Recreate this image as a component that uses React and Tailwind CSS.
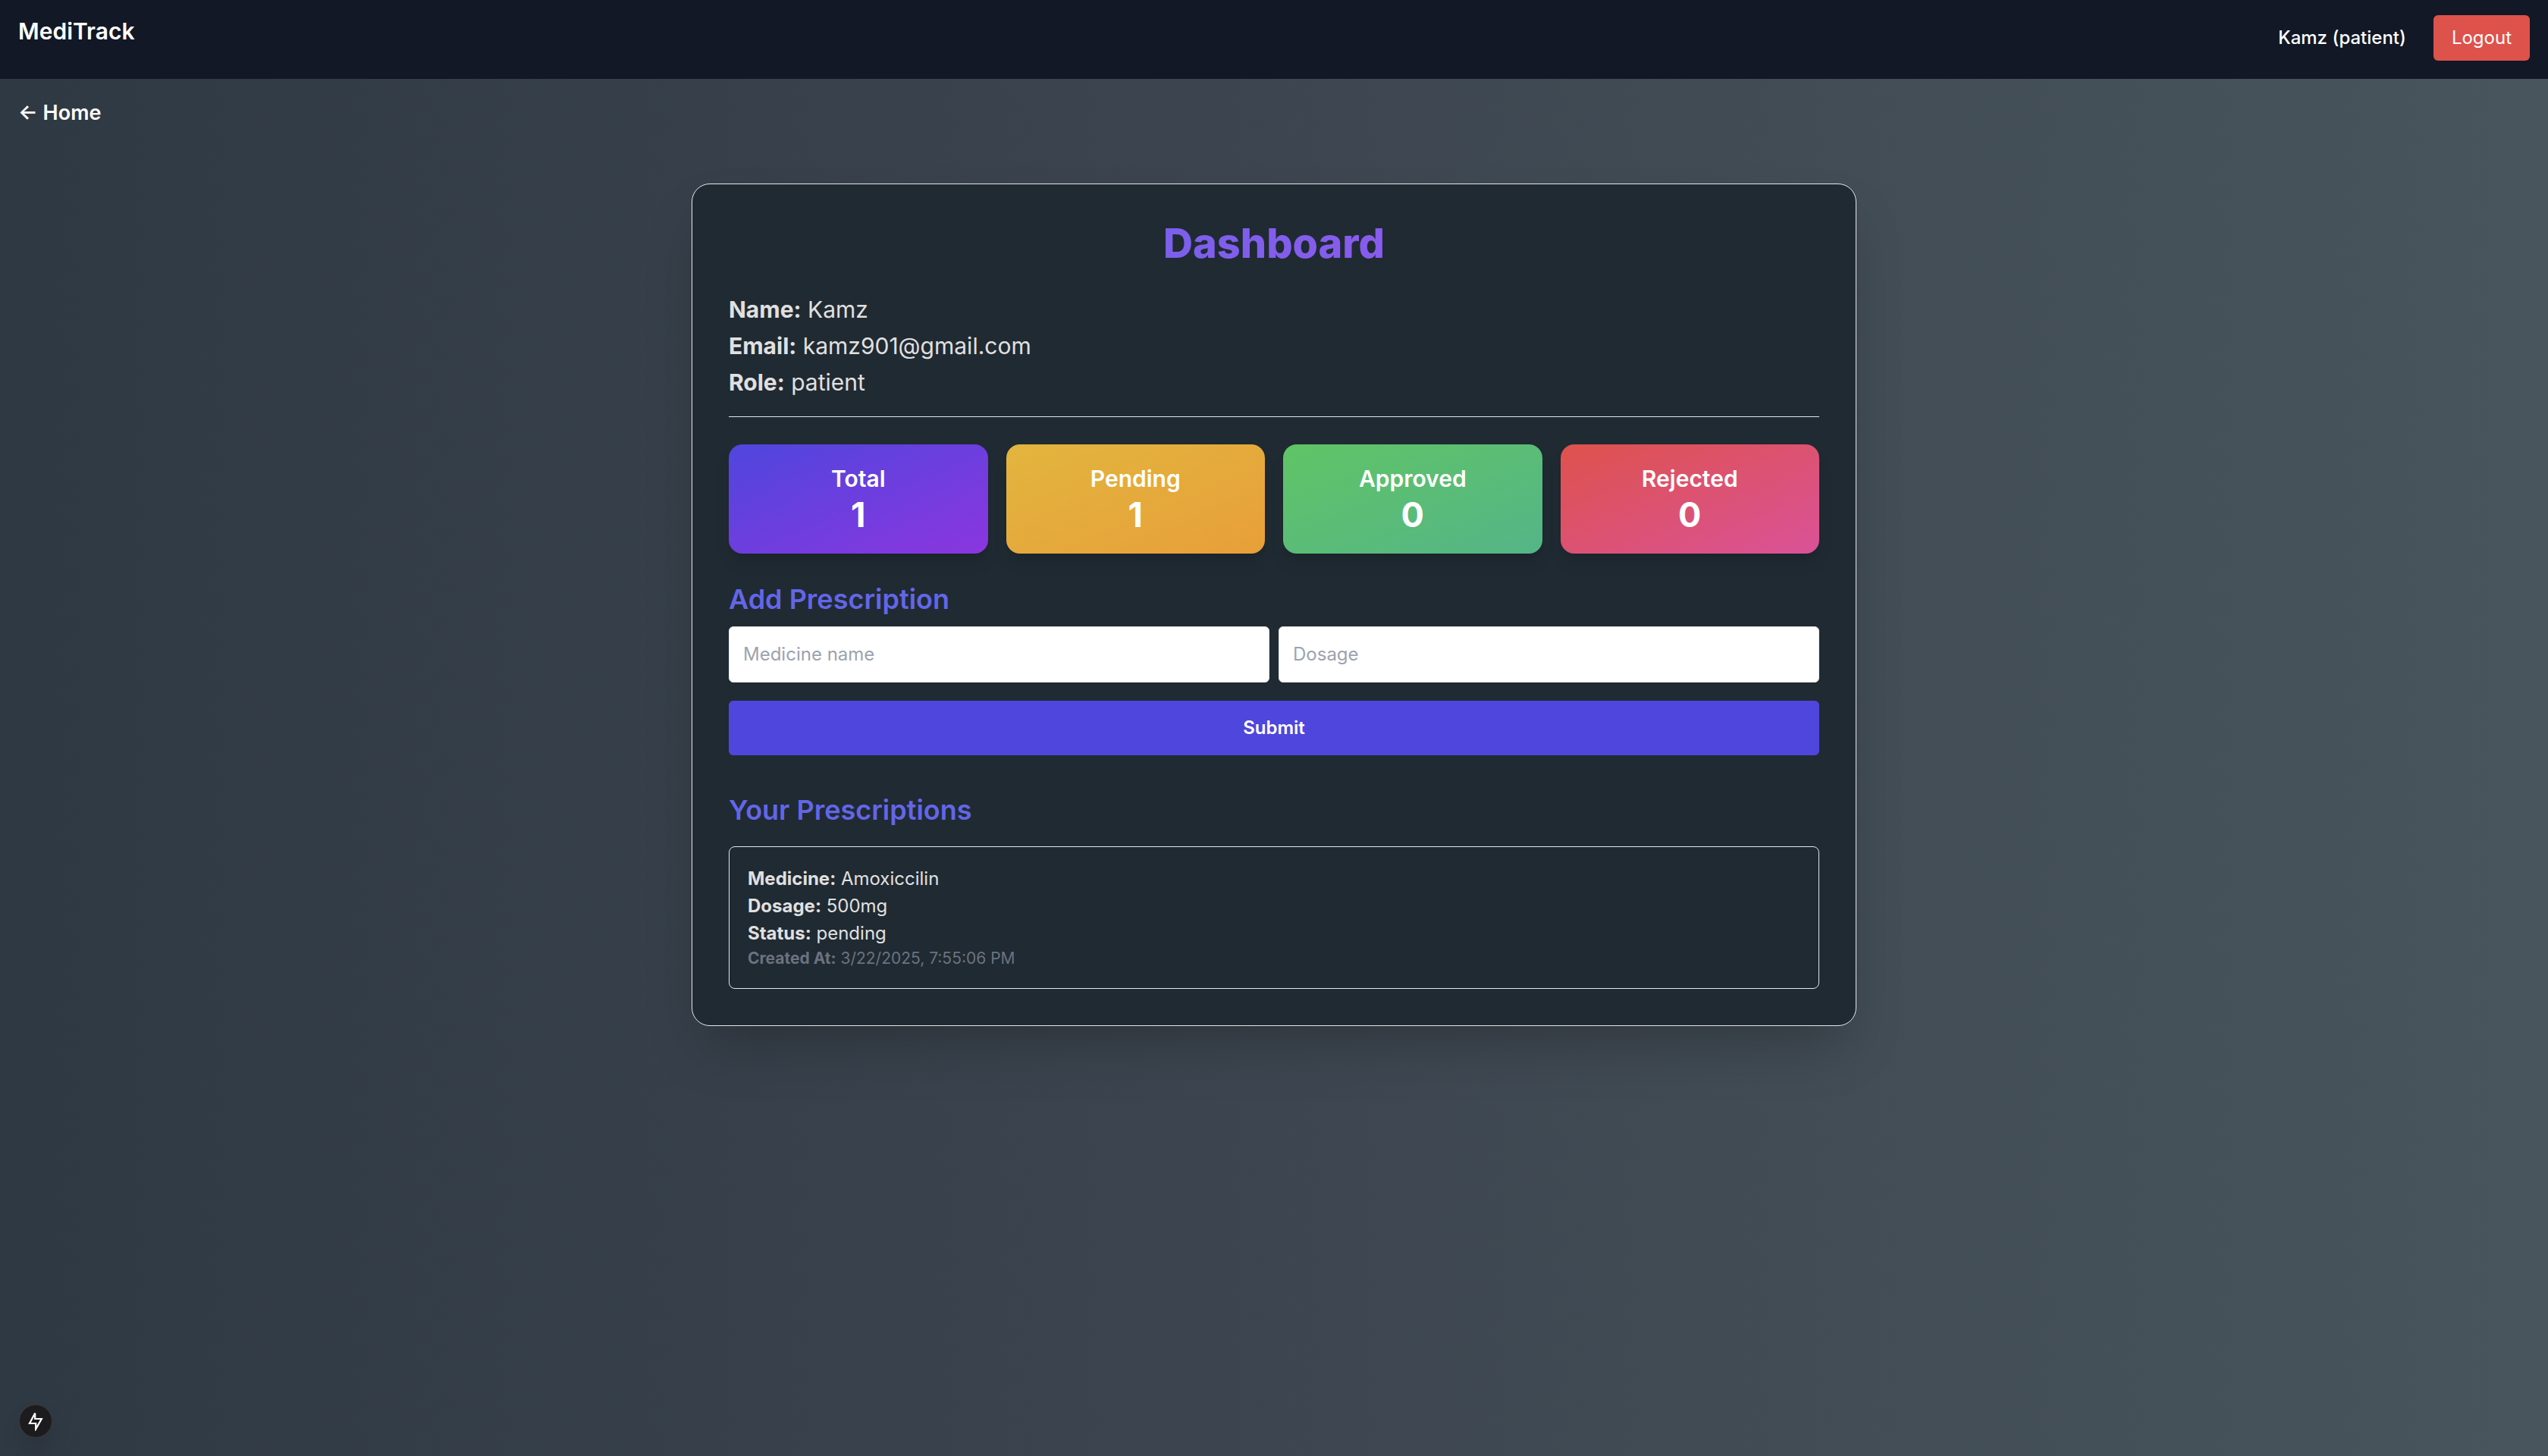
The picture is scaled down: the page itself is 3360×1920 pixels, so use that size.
import { useState } from "react";

const stats = [
  { label: "Total", value: 1, tone: "from-[#4f46dd] to-[#8b36df]" },
  { label: "Pending", value: 1, tone: "from-[#e2b53e] to-[#e89f39]" },
  { label: "Approved", value: 0, tone: "from-[#60c466] to-[#54b587]" },
  { label: "Rejected", value: 0, tone: "from-[#de524c] to-[#da5298]" },
];

const prescriptions = [
  { medicine: "Amoxiccilin", dosage: "500mg", status: "pending", createdAt: "3/22/2025, 7:55:06 PM" },
];

function Header() {
  return (
    <header className="flex items-start justify-between bg-[#121826] px-6 pt-5 pb-6 text-white">
      <a href="#" className="text-[30px] leading-[42px] font-semibold">MediTrack</a>
      <div className="flex items-center gap-9 text-2xl leading-9">
        <span className="font-medium">Kamz (patient)</span>
        <button type="button" className="rounded-md bg-[#de524c] px-6 py-3">Logout</button>
      </div>
    </header>
  );
}

function StatCard({ label, value, tone }) {
  return (
    <div className={`rounded-[18px] bg-linear-to-br/srgb p-6 text-center text-white shadow-[0_15px_22px_-4px_rgba(0,0,0,0.1),0_6px_9px_-6px_rgba(0,0,0,0.1)] ${tone}`}>
      <h3 className="text-[30px] leading-[42px] font-semibold">{label}</h3>
      <p className="text-[45px] leading-[54px] font-bold">{value}</p>
    </div>
  );
}

function Field({ label, value, onChange }) {
  return (
    <input
      aria-label={label}
      placeholder={label}
      value={value}
      onChange={(e) => onChange(e.target.value)}
      className="min-w-0 flex-1 rounded-md border border-gray-200 bg-white p-[18px] text-2xl leading-9 text-gray-900 placeholder:text-[#9ca3af]"
    />
  );
}

function PrescriptionItem({ item }) {
  return (
    <li className="rounded-lg border border-[#e5e7eb] p-6 text-2xl leading-9">
      <p><strong className="font-bold">Medicine:</strong> {item.medicine}</p>
      <p><strong className="font-bold">Dosage:</strong> {item.dosage}</p>
      <p><strong className="font-bold">Status:</strong> {item.status}</p>
      <p className="text-[21px] leading-[30px] text-[#6b7280]">
        <strong className="font-bold">Created At:</strong> {item.createdAt}
      </p>
    </li>
  );
}

export default function App() {
  const [medicine, setMedicine] = useState("");
  const [dosage, setDosage] = useState("");

  return (
    <div className="flex min-h-screen flex-col bg-linear-to-r/srgb from-[#2f3943] via-[#3d4650] to-[#48555c] font-['Inter',sans-serif]">
      <Header />
      <main className="p-6">
        <a href="#" className="inline-block text-[27px] leading-[42px] font-semibold text-white">← Home</a>

        <section className="mx-auto mt-[72px] max-w-[1536px] rounded-3xl border border-[#e5e7eb] bg-[#202a32] p-12 text-[#e0e0e0] shadow-[0_38px_75px_-18px_rgba(0,0,0,0.25)]">
          <h1 className="mb-9 bg-linear-to-r/srgb from-[#6366e8] to-[#a055f0] bg-clip-text text-center text-[54px] leading-[60px] font-extrabold text-transparent">
            Dashboard
          </h1>

          <div className="mb-9 space-y-1.5 border-b border-[#e5e7eb] pb-6 text-[30px] leading-[42px]">
            <p><strong className="font-bold">Name:</strong> Kamz</p>
            <p><strong className="font-bold">Email:</strong> kamz901@gmail.com</p>
            <p><strong className="font-bold">Role:</strong> patient</p>
          </div>

          <div className="mb-9 grid grid-cols-4 gap-6">
            {stats.map((s) => <StatCard key={s.label} {...s} />)}
          </div>

          <form className="mb-12" onSubmit={(e) => e.preventDefault()}>
            <h2 className="mb-3 text-4xl leading-[48px] font-semibold text-[#6366e8]">Add Prescription</h2>
            <div className="mb-6 flex gap-3">
              <Field label="Medicine name" value={medicine} onChange={setMedicine} />
              <Field label="Dosage" value={dosage} onChange={setDosage} />
            </div>
            <button type="submit" className="w-full rounded-md bg-[#4f46dd] p-[18px] text-2xl leading-9 font-semibold text-white">
              Submit
            </button>
          </form>

          <h2 className="mb-6 text-4xl leading-[48px] font-semibold text-[#6366e8]">Your Prescriptions</h2>
          <ul className="space-y-6">
            {prescriptions.map((p) => <PrescriptionItem key={p.createdAt} item={p} />)}
          </ul>
        </section>
      </main>

      <button
        type="button"
        aria-label="Open developer tools"
        className="fixed bottom-6 left-[25px] flex size-[44px] items-center justify-center rounded-full border border-[#3a3837] bg-[#1c1b1d] shadow-[0_16px_32px_-8px_rgba(0,0,0,0.24)]"
      >
        <svg width="20" height="26" viewBox="0 0 20 26" fill="none" stroke="#fff" strokeWidth="2.2" aria-hidden="true">
          <path d="M9.2 2.5 L2 16 H10.2 V23.5 L17.8 10 H9.2 Z" />
        </svg>
      </button>
    </div>
  );
}
